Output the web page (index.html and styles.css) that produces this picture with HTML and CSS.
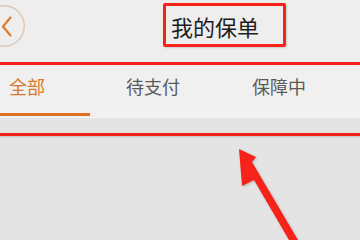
FILE: index.html
```html
<!DOCTYPE html>
<html lang="zh-CN">
<head>
  <meta charset="UTF-8">
  <meta name="viewport" content="width=device-width, initial-scale=1.0">
  <title>我的保单</title>
  <link rel="stylesheet" href="styles.css">
</head>
<body>
  <div class="screen">
    <header class="topbar">
      <button class="back" type="button">
        <svg width="42" height="42" viewBox="0 0 42 42">
          <circle cx="21" cy="21" r="20.3" fill="none" stroke="#dbc7b6" stroke-width="1.4"/>
          <path d="M27.5 12.5 L20 21.5 L27.5 30.5" fill="none" stroke="#e07a2c" stroke-width="2.2" stroke-linecap="round" stroke-linejoin="round"/>
        </svg>
      </button>
      <h1 class="title">我的保单</h1>
    </header>

    <nav class="tabs">
      <a class="tab active">全部</a>
      <a class="tab">待支付</a>
      <a class="tab">保障中</a>
    </nav>

    <div class="content"></div>

    <!-- annotation marks -->
    <div class="mark mark-title"></div>
    <div class="mark mark-tabs"></div>
    <svg class="mark-arrow" width="360" height="240" viewBox="0 0 360 240">
      <polygon points="239,149 256,157 252,162 298,240 289,240 254,180 242,186" fill="#f7231b"/>
    </svg>
  </div>
</body>
</html>
```

FILE: styles.css
```css
* {
  box-sizing: border-box;
}

body {
  margin: 0;
  font-family: "Noto Sans CJK SC", "Noto Sans", sans-serif;
  background-color: #e4e4e4;
}

.screen {
  position: relative;
  width: 360px;
  height: 240px;
  overflow: hidden;
  background-color: #e4e4e4;
}

.topbar {
  display: flex;
  align-items: flex-start;
  height: 62px;
  padding-top: 5px;
  background-color: #eeeeee;
}

.back {
  width: 42px;
  height: 42px;
  margin-left: -17px;
  padding: 0;
  border: none;
  background: none;
}

.back svg {
  display: block;
}

.title {
  margin: 10px 0 0 146px;
  font-size: 22px;
  line-height: 22px;
  font-weight: 400;
  color: #1e1e1e;
}

.tabs {
  display: flex;
  margin-left: -36px;
  background-color: #f0f0f0;
  border-bottom: 1px solid #f6f6f6;
}

.tab {
  position: relative;
  width: 126px;
  height: 55px;
  padding-top: 15px;
  text-align: center;
  font-size: 18px;
  line-height: 18px;
  color: #5a5a5a;
}

.tab.active {
  color: #d9772a;
}

.tab.active::after {
  content: "";
  position: absolute;
  left: 0;
  right: 0;
  bottom: 1px;
  height: 3px;
  background-color: #df6f1e;
}

.content {
  height: 130px;
}

.mark {
  position: absolute;
  border: 3px solid #f7231b;
  border-radius: 2px;
  box-shadow: 1px 1px 2px rgba(0, 0, 0, 0.15);
}

.mark-title {
  top: 3px;
  left: 163px;
  width: 123px;
  height: 44px;
}

.mark-tabs {
  top: 62px;
  left: -6px;
  right: -6px;
  height: 74px;
}

.mark-arrow {
  position: absolute;
  top: 0;
  left: 0;
  pointer-events: none;
  filter: drop-shadow(1px 1px 1px rgba(0, 0, 0, 0.2));
}
```
